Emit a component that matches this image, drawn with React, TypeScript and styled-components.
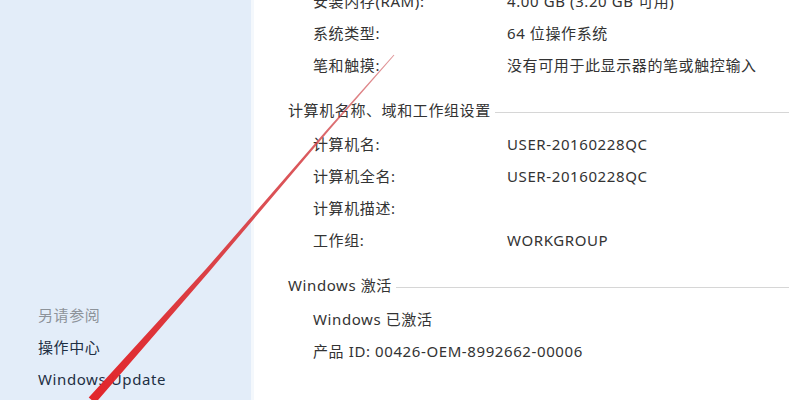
import styled, { createGlobalStyle } from 'styled-components';

const GlobalStyle = createGlobalStyle`
    html, body {
        margin: 0;
        padding: 0;
        background: #ffffff;
    }
    body {
        font-family: 'Noto Sans', 'Noto Sans CJK SC', sans-serif;
        font-size: 15px;
        letter-spacing: 0.6px;
        color: #333333;
    }
`;

type Item = { label: string; value?: string };

const systemRows: Item[] = [
    { label: '安装内存(RAM):', value: '4.00 GB (3.20 GB 可用)' },
    { label: '系统类型:', value: '64 位操作系统' },
    { label: '笔和触摸:', value: '没有可用于此显示器的笔或触控输入' },
];

const computerRows: Item[] = [
    { label: '计算机名:', value: 'USER-20160228QC' },
    { label: '计算机全名:', value: 'USER-20160228QC' },
    { label: '计算机描述:' },
    { label: '工作组:', value: 'WORKGROUP' },
];

const App = () => {
    return (
        <>
            <GlobalStyle />
            <StyledWindow>
                <StyledSidebar>
                    <StyledSideLink $muted>另请参阅</StyledSideLink>
                    <StyledSideLink>操作中心</StyledSideLink>
                    <StyledSideLink>Windows Update</StyledSideLink>
                </StyledSidebar>
                <StyledMain>
                    <StyledScroll>
                        {systemRows.map((r) => (
                            <StyledRow key={r.label}>
                                <StyledLabel>{r.label}</StyledLabel>
                                <StyledValue>{r.value}</StyledValue>
                            </StyledRow>
                        ))}
                        <StyledSection>
                            <StyledHeader>
                                <span>计算机名称、域和工作组设置</span>
                                <StyledRule />
                            </StyledHeader>
                            {computerRows.map((r) => (
                                <StyledRow key={r.label}>
                                    <StyledLabel>{r.label}</StyledLabel>
                                    <StyledValue>{r.value}</StyledValue>
                                </StyledRow>
                            ))}
                        </StyledSection>
                        <StyledSection>
                            <StyledHeader>
                                <span>Windows 激活</span>
                                <StyledRule />
                            </StyledHeader>
                            <StyledRow>
                                <StyledLabel>Windows 已激活</StyledLabel>
                            </StyledRow>
                            <StyledRow>
                                <StyledLabel>产品 ID: 00426-OEM-8992662-00006</StyledLabel>
                            </StyledRow>
                        </StyledSection>
                    </StyledScroll>
                </StyledMain>
                {/* red annotation stroke drawn over the screenshot */}
                <StyledMark viewBox="0 0 789 400" width="789" height="400">
                    <defs>
                        <linearGradient id="ink" x1="394" y1="55" x2="92" y2="400" gradientUnits="userSpaceOnUse">
                            <stop offset="0" stopColor="#c8474c" stopOpacity="0.55" />
                            <stop offset="0.3" stopColor="#d43a3f" stopOpacity="0.85" />
                            <stop offset="1" stopColor="#e2262b" stopOpacity="1" />
                        </linearGradient>
                    </defs>
                    <polygon
                        points="394.4,55.3 393.6,54.7 327.1,129.5 206.4,268.6 88.7,397.4 95.3,403.2 209.4,271.4 328.9,130.5"
                        fill="url(#ink)"
                    />
                </StyledMark>
            </StyledWindow>
        </>
    );
};

export default App;

const StyledWindow = styled.div`
    position: relative;
    display: flex;
    width: 789px;
    height: 400px;
    overflow: hidden;
`;

const StyledSidebar = styled.div`
    width: 254px;
    flex-shrink: 0;
    display: flex;
    flex-direction: column;
    justify-content: flex-end;
    padding: 0 0 5px 38px;
    box-sizing: border-box;
    background: #e3edf9;
    border-right: 3px solid #f4f8fc;
`;

const StyledSideLink = styled.div<{ $muted?: boolean }>`
    height: 32px;
    line-height: 32px;
    color: ${(p) => (p.$muted ? '#8d939a' : '#1e2f44')};
    white-space: nowrap;
`;

const StyledMain = styled.div`
    flex: 1;
    background: #ffffff;
    overflow: hidden;
`;

const StyledScroll = styled.div`
    margin-top: -15px;
`;

const StyledSection = styled.div`
    padding-top: 12px;
`;

const StyledHeader = styled.div`
    display: flex;
    align-items: center;
    height: 32px;
    padding-left: 34px;
    margin-bottom: 3px;
    white-space: nowrap;
`;

const StyledRule = styled.div`
    flex: 1;
    height: 1px;
    margin: 6px 0 0 4px;
    background: #d6d6d6;
`;

const StyledRow = styled.div`
    display: flex;
    height: 32px;
    line-height: 32px;
    padding-left: 59px;
    white-space: nowrap;
`;

const StyledLabel = styled.div`
    width: 194px;
    flex-shrink: 0;
`;

const StyledValue = styled.div`
    color: #333333;
`;

const StyledMark = styled.svg`
    position: absolute;
    left: 0;
    top: 0;
    pointer-events: none;
`;
